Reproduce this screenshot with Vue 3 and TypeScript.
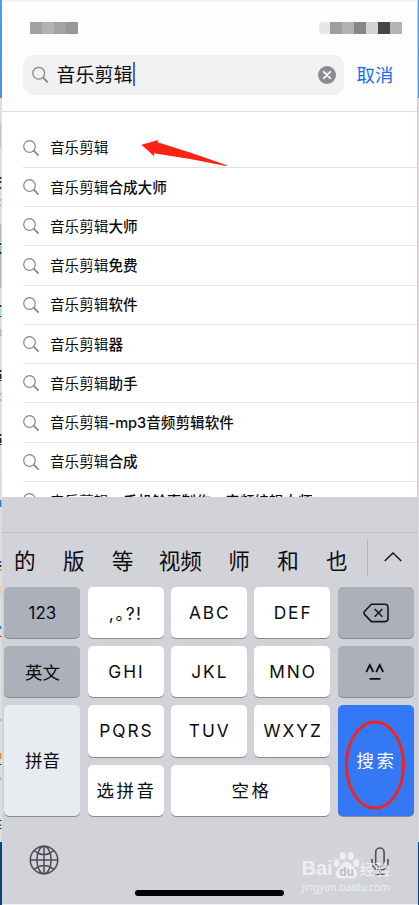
<script setup lang="ts">
interface Suggestion { base: string; extra: string }
interface Key { label: string; kind: string }
interface Speck { y: number; h: number; color: string }

const query = '音乐剪辑'
const suggestions: Suggestion[] = [
  '', '合成大师', '大师', '免费', '软件', '器', '助手', '-mp3音频剪辑软件', '合成', '—手机铃声制作、音频编辑大师',
].map((extra) => ({ base: query, extra }))

const candidates: string[] = ['的', '版', '等', '视频', '师', '和', '也']

const keys: Key[] = [
  { label: '123', kind: 'dark num' },
  { label: ',。?!', kind: 'punct' },
  { label: 'ABC', kind: 'latin' },
  { label: 'DEF', kind: 'latin' },
  { label: '', kind: 'dark delete' },
  { label: '英文', kind: 'dark' },
  { label: 'GHI', kind: 'latin' },
  { label: 'JKL', kind: 'latin' },
  { label: 'MNO', kind: 'latin' },
  { label: '', kind: 'dark face' },
  { label: '拼音', kind: 'pinyin tall' },
  { label: 'PQRS', kind: 'latin' },
  { label: 'TUV', kind: 'latin' },
  { label: 'WXYZ', kind: 'latin' },
  { label: '搜索', kind: 'search tall' },
  { label: '选拼音', kind: 'spaced' },
  { label: '空格', kind: 'spaced wide' },
]

const leftMosaic: string[] = ['#a2a2a2', '#b1b1b1', '#a3a3a3', '#989898']
const rightMosaic: string[] = ['#e7e7e7', '#9e9e9e', '#b2b2b2', '#878787', '#d3d3d3', '#464646', '#b3b3b3']

const specks: Speck[] = [
  { y: 123, h: 25, color: '#c8c6c7' }, { y: 177, h: 2, color: '#222' }, { y: 181, h: 2, color: '#333' },
  { y: 187, h: 2, color: '#2946a5' }, { y: 199, h: 2, color: '#c9b0a5' }, { y: 204, h: 2, color: '#a6b6dd' },
  { y: 224, h: 18, color: '#b9b9bd' }, { y: 243, h: 2, color: '#233' }, { y: 246, h: 6, color: '#7cc79b' },
  { y: 252, h: 2, color: '#222' }, { y: 254, h: 34, color: '#b8b8b8' }, { y: 305, h: 2, color: '#222' },
  { y: 309, h: 6, color: '#9bdde0' }, { y: 316, h: 1, color: '#222' }, { y: 329, h: 7, color: '#b9b3b1' },
  { y: 370, h: 2, color: '#111' }, { y: 374, h: 5, color: '#32104f' }, { y: 380, h: 1, color: '#222' },
  { y: 393, h: 2, color: '#b9a99f' }, { y: 399, h: 2, color: '#caa' }, { y: 434, h: 2, color: '#222' },
  { y: 438, h: 5, color: '#22104d' }, { y: 444, h: 1, color: '#222' }, { y: 500, h: 7, color: '#2a76d2' },
  { y: 561, h: 2, color: '#334fa5' }, { y: 565, h: 2, color: '#222' }, { y: 569, h: 2, color: '#c98b38' },
  { y: 585, h: 9, color: '#ecc9a5' }, { y: 626, h: 3, color: '#2e78e6' }, { y: 636, h: 1, color: '#922' },
  { y: 719, h: 2, color: '#b9a1a5' }, { y: 753, h: 6, color: '#dc8b2e' }, { y: 764, h: 1, color: '#222' },
  { y: 777, h: 3, color: '#9cb8d8' }, { y: 820, h: 1, color: '#222' }, { y: 824, h: 2, color: '#3d89c0' },
  { y: 828, h: 1, color: '#222' },
]
</script>

<template>
  <div class="desktop">
    <svg class="edge" width="2" height="905" viewBox="0 0 2 905">
      <rect v-for="s in specks" :key="s.y" x="0" :y="s.y" width="1.3" :height="s.h" :fill="s.color" />
    </svg>
    <main class="phone">
      <header class="status">
        <div class="mosaic"><i v-for="(c, i) in leftMosaic" :key="i" :style="{ background: c }"></i></div>
        <div class="mosaic right"><i v-for="(c, i) in rightMosaic" :key="i" :style="{ background: c }"></i></div>
      </header>

      <div class="searchbar">
        <div class="field">
          <svg class="lens" width="18" height="18" viewBox="0 0 18 18"><circle cx="7.7" cy="7.2" r="5.9" /><path d="M12 11.5 16.8 16.3" /></svg>
          <span class="query">{{ query }}</span><span class="caret"></span>
          <svg class="clear" width="18" height="18" viewBox="0 0 18 18"><circle cx="9" cy="9" r="9" /><path d="M5.8 5.8 12.2 12.2M12.2 5.8 5.8 12.2" /></svg>
        </div>
        <span class="cancel">取消</span>
      </div>

      <section class="results">
        <div v-for="(s, i) in suggestions" :key="i" class="row">
          <svg class="lens" width="17" height="17" viewBox="0 0 17 17"><circle cx="6.5" cy="6.5" r="5.8" /><path d="M10.7 10.7 15.6 15.6" /></svg>
          <span>{{ s.base }}<b>{{ s.extra }}</b></span>
          <svg v-if="i === 0" class="arrow" width="88" height="28" viewBox="0 0 88 28"><path d="M0.5 4.7 17.2 0 16.6 2.3Q52 13 86 25.2L85 26Q49 18.3 12.8 13.2L13.4 16.6Z" /></svg>
        </div>
      </section>

      <section class="keyboard">
        <div class="accessory"></div>
        <div class="candidates">
          <span v-for="c in candidates" :key="c" :class="{ pair: c.length > 1 }">{{ c }}</span>
          <div class="expand"><svg width="18" height="10" viewBox="0 0 18 10"><path d="M.7 9 9 1 17.3 9" /></svg></div>
        </div>
        <div class="keys">
          <div v-for="(k, i) in keys" :key="i" class="key" :class="k.kind">
            <svg v-if="k.kind === 'dark delete'" width="26" height="20" viewBox="0 0 26 20"><path d="M8.4 1.2H22Q25 1.2 25 4.2V15.6Q25 18.6 22 18.6H8.4L1.7 11.6Q.2 9.9 1.7 8.2ZM11.7 6 19.3 13.8M19.3 6 11.7 13.8" /></svg>
            <svg v-else-if="k.kind === 'dark face'" width="20" height="18" viewBox="0 0 20 18"><path d="M1.3 9 4.8 2 8.3 9M11.2 9 14.7 2 18.2 9M4.5 15.8H15.5" /></svg>
            <span v-else>{{ k.label }}</span>
            <svg v-if="k.label === '搜索'" class="ring" width="60" height="90" viewBox="0 0 60 90"><ellipse cx="30" cy="45" rx="28.5" ry="43.2" /></svg>
          </div>
        </div>
        <footer class="bottom">
          <svg class="globe" width="30" height="30" viewBox="0 0 30 30"><circle cx="15" cy="15" r="13.7" /><ellipse cx="15" cy="15" rx="7.1" ry="13.7" /><path d="M15 1.3V28.7M1.3 15H28.7M5.2 5.6Q15 13.6 24.8 5.6M5.2 24.4Q15 16.4 24.8 24.4" /></svg>
          <svg class="mic" width="18" height="29" viewBox="0 0 18 29"><rect x="4.7" y="1" width="8.4" height="19" rx="4.2" /><path d="M1 12V15.5C1 26 17 26 17 15.5V12M9 23.5V27M4.5 27.3H13.5" /></svg>
          <div class="watermark">
            <div class="brand">
              <span>Bai</span>
              <svg width="27" height="29" viewBox="0 0 27 29"><ellipse cx="3.7" cy="12" rx="3" ry="4" /><ellipse cx="9.7" cy="5" rx="3" ry="4" /><ellipse cx="17.7" cy="5" rx="3" ry="4" /><ellipse cx="23.4" cy="12" rx="3" ry="4" /><path d="M13.5 10.5C9 10.5 8.5 15 5 18 1 21.5 2.5 27.5 7.5 27.5Q13.5 26.5 19.5 27.5C24.8 27.5 26 21.5 22 18 18.5 15 18 10.5 13.5 10.5Z" /><text x="13.5" y="25.3">du</text></svg>
              <span class="cn">经验</span>
            </div>
            <div class="site">jingyan.baidu.com</div>
          </div>
          <div class="home"></div>
        </footer>
      </section>
    </main>
  </div>
</template>

<style>
body { margin: 0; overflow: hidden; }
</style>

<style scoped>
* { box-sizing: border-box; }
.desktop {
  position: relative; display: flex; width: 419px; height: 905px; padding: 0 2px;
  background: linear-gradient(#4d9ee5 0, #4c91dc 98px, #e1dddd 98px, #dfdcdc 842px, #05427e 842px);
  font-family: Inter, "Noto Sans CJK SC", sans-serif; color: #0c0c0d;
}
.edge { position: absolute; left: 0; top: 0; }
svg { fill: none; flex: none; }
.phone {
  width: 416px; height: 904px; flex: none; display: flex; flex-direction: column;
  background: #fff; border-top: 2px solid #f2f2f2; border-right: 1px solid #cfcfd2;
  box-shadow: 0 1px 0 #f2f2f2;
}
.status { height: 53px; padding: 20px 15px 0 28px; display: flex; justify-content: space-between; align-items: flex-start; background: #fdfdfd; }
.mosaic { display: flex; height: 12px; }
.mosaic i { width: 12px; height: 12px; }
.mosaic.right i:first-child { width: 11px; border-radius: 4px 0 0 4px; }
.searchbar { height: 57px; padding-left: 21px; display: flex; align-items: flex-start; background: #fdfdfd; border-bottom: 1px solid #dedee0; flex: none; }
.field { width: 321px; height: 40px; padding: 0 8px; border-radius: 11px; background: #f1f1f2; display: flex; align-items: center; }
.lens { stroke: #86868a; stroke-width: 1.2; }
.lens path { stroke-width: 1.8; }
.query { margin-left: 7.5px; padding-top: 2px; font-size: 19px; line-height: 38px; }
.caret { width: 2px; height: 24px; margin-top: -2px; background: #4568e6; }
.clear { margin-left: auto; }
.clear circle { fill: #8b8b90; }
.clear path { stroke: #fff; stroke-width: 1.9; stroke-linecap: round; }
.cancel { margin-left: 12.5px; font-size: 18.4px; line-height: 40px; color: #1c6cf2; }
.results { height: 385px; padding-top: 16.7px; overflow: hidden; flex: none; }
.row { position: relative; height: 39.25px; margin-left: 21px; border-bottom: 1px solid #e2e2e3; display: flex; align-items: center; font-size: 14.6px; white-space: nowrap; }
.row span { margin-left: 10px; padding-top: 1px; line-height: 20px; }
.row .lens { margin-top: 1px; }
.row b { font-weight: 500; }
.arrow { position: absolute; left: 118px; top: 11px; fill: #fc2313; }
.keyboard { flex: 1; background: #d1d3d9; display: flex; flex-direction: column; }
.accessory { height: 36px; border-bottom: 1px solid #bdbfc4; }
.candidates { height: 54px; padding-left: 12px; display: flex; align-items: center; gap: 27.3px; font-size: 21.6px; white-space: nowrap; }
.candidates span { flex: none; padding-top: 1px; line-height: 30px; }
.candidates .pair { margin: 0 -1px 0 -2px; }
.expand { flex: none; margin-left: -8px; width: 51px; height: 38px; border-left: 1px solid #b2b5bb; display: flex; align-items: center; justify-content: center; padding-bottom: 2px; margin-bottom: 4px; }
.expand svg { stroke: #17181a; stroke-width: 1.5; }
.keys { padding-left: 2.4px; display: grid; grid-template-columns: repeat(5, 76px); grid-template-rows: repeat(4, 51.2px); gap: 8px 7.35px; }
.key { position: relative; display: flex; align-items: center; justify-content: center; border-radius: 5px; background: #fff; box-shadow: 0 1px 0 #888a8e; font-size: 17.5px; }
.dark { background: #abb0bb; }
.num { font-size: 17px; }
.latin { letter-spacing: 2px; padding-left: 1.5px; font-size: 17.3px; }
.punct { font-feature-settings: "halt"; letter-spacing: 1.5px; }
.tall { grid-row: span 2; padding-bottom: 2px; }
.wide { grid-column: span 2; }
.pinyin { background: #e8ebf0; }
.spaced { letter-spacing: 2.5px; padding: 0 0 2px 1.5px; }
.search { background: #3478f6; color: #fff; letter-spacing: 2.5px; padding-left: 1.5px; }
.delete svg { stroke: #17181a; stroke-width: 1.6; stroke-linejoin: round; }
.face svg { stroke: #101113; stroke-width: 1.8; margin-right: 2px; }
.ring { position: absolute; left: 7px; top: 15px; stroke: #f72218; stroke-width: 2.8; }
.bottom { position: relative; flex: 1; display: flex; justify-content: space-between; align-items: flex-start; padding: 29px 28px 0 27px; }
.globe { stroke: #494d53; stroke-width: 1.5; }
.mic { margin-top: 2px; stroke: #4b4f57; stroke-width: 1.6; }
.home { position: absolute; left: 133px; bottom: 8px; width: 149px; height: 6px; border-radius: 3px; background: #000; }
.watermark { position: absolute; left: 299.5px; top: 32px; color: #f4f5f7; opacity: .82; }
.brand { display: flex; align-items: flex-end; height: 32px; font: 700 20px/21px "Liberation Sans", sans-serif; }
.brand span { padding-bottom: 1px; }
.brand svg { fill: #f4f5f7; }
.brand text { font: 700 12px "Liberation Sans", sans-serif; fill: #b4b8c0; text-anchor: middle; }
.brand .cn { font: 500 15px/21px "Noto Sans CJK SC", sans-serif; padding-bottom: 1px; }
.site { font: 10.2px/12px "Noto Sans", sans-serif; margin-top: 1px; }
</style>
